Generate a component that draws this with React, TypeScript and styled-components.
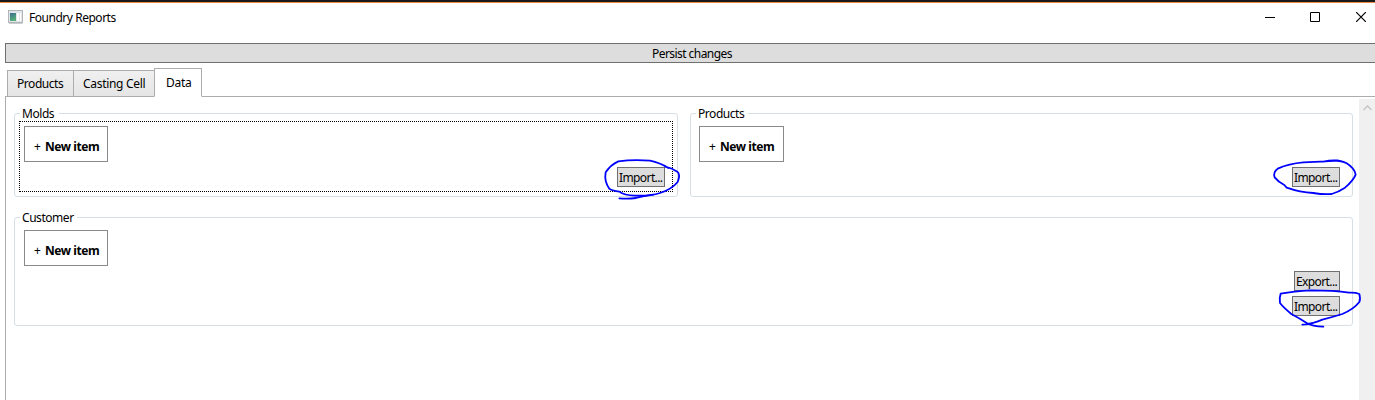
import React from "react";
import styled, { createGlobalStyle } from "styled-components";

const GlobalStyle = createGlobalStyle`
  * { box-sizing: border-box; }
  body {
    margin: 0;
    background: #fff;
    overflow: hidden;
    color: #000;
    font: 12px/16px "Noto Sans", "Open Sans", sans-serif;
  }
`;

const Window = styled.div`
  position: relative;
  height: 400px;
  overflow: hidden;
  display: flex;
  flex-direction: column;
  border-top: 2px solid #17191b;
`;

const TitleBar = styled.header`
  height: 41px;
  flex: none;
  display: flex;
  align-items: flex-start;
  border-top: 1px solid #f08a45;
  padding: 7px 9px 0 8px;
`;

const Title = styled.h1`
  margin: 0 0 0 6px;
  flex: 1;
  font: inherit;
  letter-spacing: -0.47px;
`;

const Controls = styled.div`
  display: flex;
  gap: 36px;
  padding-top: 2px;
`;

const PersistButton = styled.button`
  width: 1374px;
  height: 20px;
  flex: none;
  margin-left: 5px;
  padding: 2px 0 0;
  border: 1px solid #707070;
  background: #ddd;
  font: inherit;
  line-height: 16px;
  letter-spacing: -0.56px;
`;

const Tabs = styled.nav`
  height: 34px;
  flex: none;
  display: flex;
  align-items: flex-end;
  padding-left: 7px;
`;

const Tab = styled.div<{ $w: number; $active?: boolean; $tracking?: number }>`
  width: ${(p) => p.$w}px;
  height: ${(p) => (p.$active ? 29 : 27)}px;
  margin-right: ${(p) => (p.$active ? 0 : -1)}px;
  border: 1px solid #acacac;
  border-bottom-color: ${(p) => (p.$active ? "#fff" : "#acacac")};
  background: ${(p) => (p.$active ? "#fff" : "linear-gradient(#f0f0f0, #e5e5e5)")};
  position: relative;
  z-index: ${(p) => (p.$active ? 2 : 1)};
  padding: ${(p) => (p.$active ? "6px 0 0 11px" : "5px 0 0 9px")};
  white-space: nowrap;
  letter-spacing: ${(p) => p.$tracking ?? -0.3}px;
`;

const Panel = styled.main`
  flex: 1;
  display: flex;
  margin: -1px 0 0 5px;
  border: solid #acacac;
  border-width: 1px 0 0 1px;
`;

const Groups = styled.div`
  width: 1339px;
  margin-left: 8px;
  padding-top: 16px;
  display: grid;
  grid-template-columns: 664px 663px;
  grid-template-rows: 84px 109px;
  column-gap: 12px;
  row-gap: 20px;
`;

const Group = styled.section<{ $wide?: boolean }>`
  grid-column: ${(p) => (p.$wide ? "1 / 3" : "auto")};
  display: flex;
  flex-direction: column;
  border: 1px solid #d5dfe5;
  border-radius: 3px;
  padding: 0 4px 4px;
`;

const Legend = styled.h2<{ $w: number }>`
  width: ${(p) => p.$w}px;
  height: 16px;
  flex: none;
  margin: -8px 0 -1px 1px;
  padding-left: 2px;
  background: #fff;
  font: inherit;
  letter-spacing: -0.45px;
  white-space: nowrap;
`;

const GroupBody = styled.div<{ $focused?: boolean }>`
  flex: 1;
  display: flex;
  justify-content: space-between;
  border: 1px ${(p) => (p.$focused ? "dotted #000" : "solid transparent")};
  padding: 4px 7px 4px 4px;
`;

const NewItem = styled.button<{ $shifted?: boolean }>`
  width: ${(p) => (p.$shifted ? 85 : 84)}px;
  height: 36px;
  margin-left: ${(p) => (p.$shifted ? -1 : 0)}px;
  padding: 6px 0 0 9px;
  border: 1px solid #8a8a8a;
  background: #fff;
  color: #000;
  font: inherit;
  display: flex;
  align-items: center;
  gap: 4px;
  white-space: nowrap;
  b { letter-spacing: -0.42px; }
`;

const Actions = styled.div`
  display: flex;
  flex-direction: column;
  justify-content: flex-end;
  align-items: flex-end;
  gap: 5px;
`;

const Action = styled.button<{ $w: number }>`
  width: ${(p) => p.$w}px;
  height: 20px;
  padding: 2px 0 0 1px;
  border: 1px solid #707070;
  background: #ddd;
  color: #000;
  font: inherit;
  line-height: 16px;
  text-align: left;
  letter-spacing: -0.6px;
  white-space: nowrap;
`;

const ScrollBar = styled.div`
  width: 16px;
  margin: 2px 0 0 auto;
  background: #f0f0f0;
  display: flex;
  justify-content: center;
  padding-top: 6px;
`;

const Ink = styled.svg`
  position: absolute;
  left: 0;
  top: -2px;
  z-index: 5;
  pointer-events: none;
`;

const AppIcon = () => (
  <svg width="15" height="14" viewBox="0 0 15 14">
    <defs>
      <linearGradient id="pane" x1="0" y1="0" x2=".4" y2="1">
        <stop offset="0" stopColor="#3c6d92" />
        <stop offset="1" stopColor="#55b077" />
      </linearGradient>
    </defs>
    <rect x=".5" y=".5" width="14" height="12" fill="#e3e6e9" stroke="#b0b5b9" />
    <path d="M1 13.5h13.5" stroke="#c9ccce" />
    <rect x="2" y="3" width="6" height="8" fill="url(#pane)" />
    <rect x="9" y="3" width="2" height="8" fill="#fff" />
    <rect x="12" y="3" width="1" height="8" fill="#fff" />
  </svg>
);

type GroupBoxProps = {
  title: string;
  w: number;
  wide?: boolean;
  focused?: boolean;
  shifted?: boolean;
  canExport?: boolean;
};

function GroupBox(p: GroupBoxProps) {
  return (
    <Group $wide={p.wide}>
      <Legend $w={p.w}>{p.title}</Legend>
      <GroupBody $focused={p.focused}>
        <NewItem $shifted={p.shifted}>+ <b>New item</b></NewItem>
        <Actions>
          {p.canExport && <Action $w={46}>Export...</Action>}
          <Action $w={48}>Import...</Action>
        </Actions>
      </GroupBody>
    </Group>
  );
}

export default function App() {
  return (
    <>
      <GlobalStyle />
      <Window>
        <TitleBar>
          <AppIcon />
          <Title>Foundry Reports</Title>
          <Controls>
            <svg width="9" height="10" overflow="visible"><path d="M0 5.5H10" stroke="#000" /></svg>
            <svg width="10" height="10"><path d="M.5 .5h9v9h-9z" fill="none" stroke="#000" /></svg>
            <svg width="10" height="10"><path d="M0 0L10 10M10 0L0 10" stroke="#000" strokeWidth="1.2" /></svg>
          </Controls>
        </TitleBar>
        <PersistButton>Persist changes</PersistButton>
        <Tabs>
          <Tab $w={67} $tracking={-0.45}>Products</Tab>
          <Tab $w={82}>Casting Cell</Tab>
          <Tab $w={48} $active>Data</Tab>
        </Tabs>
        <Panel>
          <Groups>
            <GroupBox title="Molds" w={39} focused />
            <GroupBox title="Products" w={52} shifted />
            <GroupBox title="Customer" w={57} wide canExport />
          </Groups>
          <ScrollBar>
            <svg width="9" height="6"><path d="M.5 5L4.5 1l4 4" fill="none" stroke="#c4c4c4" strokeWidth="1.3" /></svg>
          </ScrollBar>
        </Panel>
        <Ink width="1375" height="400" fill="none" stroke="#00f" strokeWidth="5.4" strokeLinecap="round" strokeLinejoin="round">
          <g transform="translate(600 154) scale(.3333)">
            <path d="M205 42Q180 26 150 20Q100 16 55 22Q32 32 17 55Q12 82 28 104Q38 110 58 113Q72 124 105 125Q150 127 180 117Q215 106 233 84Q242 62 232 53Q215 42 195 38" />
            <path d="M58 133Q85 135 108 132Q130 126 160 122" />
          </g>
          <g transform="translate(1270 154) scale(.3333)">
            <path d="M205 20Q150 24 100 25Q55 29 25 43Q8 55 14 70Q25 84 43 93L50 101Q90 115 130 117Q160 122 185 120Q205 114 225 101Q250 80 257 62Q254 43 230 28Q205 14 160 23" />
          </g>
          <g transform="translate(1274 284) scale(.3333)">
            <path d="M148 128Q115 127 98 117Q75 102 52 90Q28 70 18 57Q16 40 20 29Q60 22 110 19Q180 19 225 26Q245 25 256 30Q260 45 256 54Q240 75 205 90Q180 98 145 107Q120 119 85 122" />
          </g>
        </Ink>
      </Window>
    </>
  );
}
